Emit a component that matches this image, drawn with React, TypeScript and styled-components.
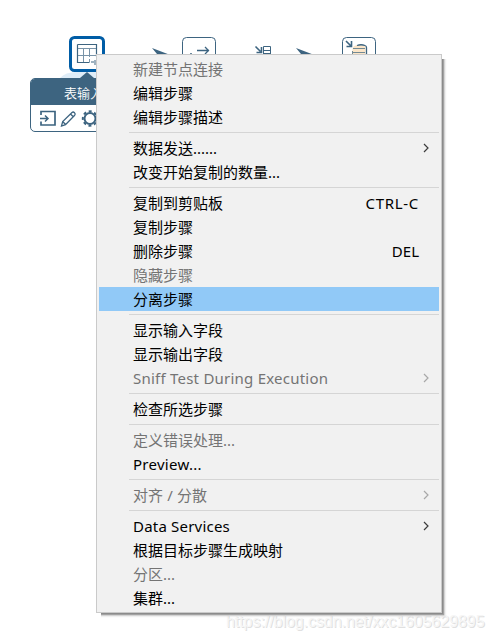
import React from "react";
import styled, { createGlobalStyle } from "styled-components";

const Global = createGlobalStyle`
  * { box-sizing: border-box; }
  body { margin: 0; background: #fff; overflow: hidden; }
`;

const Canvas = styled.main`
  position: relative;
  width: 494px;
  height: 640px;
  padding-top: 36px;
  overflow: hidden;
  background: #fff;
  font-family: "Noto Sans", "Noto Sans CJK SC", sans-serif;
`;

const Pipeline = styled.div`
  display: flex;
  align-items: center;
  height: 36px;
  padding-left: 69px;
`;

const Step = styled.div<{ $after?: number }>`
  flex: none;
  margin-right: ${(p) => p.$after ?? 0}px;
  svg { display: block; }
`;

const Callout = styled.aside`
  display: flex;
  flex-direction: column;
  width: 146px;
  padding-left: 30px;
`;

const CalloutTail = styled.svg`
  display: block;
  margin-left: 30px;
`;

const Popover = styled.section`
  width: 116px;
  height: 54px;
  border: 1px solid #3d6480;
  border-radius: 5px;
  overflow: hidden;
  background: #fff;
`;

const PopoverTitle = styled.header`
  height: 26px;
  padding-left: 33px;
  background: #3d6480;
  color: #fff;
  font-family: "Noto Sans CJK SC", sans-serif;
  font-size: 13px;
  font-weight: 350;
  line-height: 28px;
  white-space: nowrap;
`;

const PopoverTools = styled.div`
  display: flex;
  height: 26px;
  padding: 4px 0 0 7px;
  gap: 2px;
`;

const Menu = styled.nav`
  position: absolute;
  left: 96px;
  top: 54px;
  width: 346px;
  height: 559px;
  padding: 2px;
  border: 1px solid #cacaca;
  background: #f1f1f1;
  box-shadow: 1px 1px 0 #8b8b8b, 2px 2px 1px #a2a2a2, 3px 3px 2px #d0d0d0;
  clip-path: polygon(0 0, 346px 0, 346px 5px, 352px 5px, 352px 565px, 5px 565px, 5px 559px, 0 559px);
`;

const Row = styled.div<{ $disabled?: boolean; $selected?: boolean }>`
  display: flex;
  align-items: center;
  justify-content: space-between;
  height: 24px;
  padding: 0 9px 0 34px;
  color: ${(p) => (p.$disabled ? "#747474" : "#000")};
  background: ${(p) => (p.$selected ? "#91c9f7" : "transparent")};
  font-size: 15px;
  line-height: 24px;
  white-space: nowrap;
`;

const Label = styled.span<{ $spacing?: number }>`
  letter-spacing: ${(p) => p.$spacing ?? 0}px;
`;

const Shortcut = styled.span<{ $spacing?: number }>`
  margin-right: 11px;
  letter-spacing: ${(p) => p.$spacing ?? 0}px;
`;

const Separator = styled.hr`
  height: 1px;
  margin: 3px 0 3px 30px;
  border: 0;
  background: #d5d5d5;
`;

const Watermark = styled.div`
  position: absolute;
  left: 226px;
  top: 612px;
  color: #f6f6f6;
  font-family: "Liberation Sans", sans-serif;
  font-size: 16px;
  line-height: 20px;
  letter-spacing: -0.06px;
  text-shadow: 1px 1px 0 #e0e0e0;
  white-space: nowrap;
`;

type Item = {
  label: string;
  disabled?: boolean;
  selected?: boolean;
  submenu?: boolean;
  shortcut?: string;
  spacing?: number;
  shortcutSpacing?: number;
};

const groups: Item[][] = [
  [{ label: "新建节点连接", disabled: true }, { label: "编辑步骤" }, { label: "编辑步骤描述" }],
  [{ label: "数据发送......", submenu: true }, { label: "改变开始复制的数量..." }],
  [
    { label: "复制到剪贴板", shortcut: "CTRL-C", shortcutSpacing: 0.7 },
    { label: "复制步骤" },
    { label: "删除步骤", shortcut: "DEL" },
    { label: "隐藏步骤", disabled: true },
    { label: "分离步骤", selected: true },
  ],
  [
    { label: "显示输入字段" },
    { label: "显示输出字段" },
    { label: "Sniff Test During Execution", disabled: true, submenu: true, spacing: 0.23 },
  ],
  [{ label: "检查所选步骤" }],
  [{ label: "定义错误处理...", disabled: true }, { label: "Preview...", spacing: 0.28 }],
  [{ label: "对齐 / 分散", disabled: true, submenu: true, spacing: 0.1 }],
  [
    { label: "Data Services", submenu: true, spacing: 0.2 },
    { label: "根据目标步骤生成映射" },
    { label: "分区...", disabled: true },
    { label: "集群..." },
  ],
];

const Chevron = ({ disabled }: { disabled?: boolean }) => (
  <svg width="8" height="10" viewBox="0 0 8 10">
    <path d="M2 1l4 4-4 4" fill="none" stroke={disabled ? "#a8a8a8" : "#3c3c3c"} strokeWidth="1.2" />
  </svg>
);

const ink = "#3d6480";

const HopArrow = () => (
  <svg width="18" height="12" viewBox="0 0 18 12">
    <path d="M0 0L17 6.5 3 12 5 6z" fill={ink} />
  </svg>
);

const TableInputIcon = () => (
  <svg width="36" height="36" viewBox="0 0 36 36">
    <rect x="1.5" y="1.5" width="33" height="33" rx="4" fill="#fff" stroke="#005da6" strokeWidth="3" />
    <path d="M8.500 8.500h19v12M8.500 8.500v18h12" fill="none" stroke={ink} strokeWidth="1.2" />
    <path d="M9 12.500h18M9 19.500h18M14.500 12v14M20.500 12v9M20.500 23v3" fill="none" stroke="#7893a8" />
    <path d="M22 26h3M26 24v5" stroke={ink} />
  </svg>
);

const MapIcon = () => (
  <svg width="34" height="34" viewBox="0 0 34 34" fill="none" stroke={ink}>
    <rect x=".5" y=".5" width="33" height="33" rx="4" />
    <path d="M15 13.500h12M23 10l3.500 3.500L23 17" strokeWidth="1.300" />
    <path d="M9 16v3" strokeWidth="1.500" />
  </svg>
);

const InsertIcon = () => (
  <svg width="19" height="18" viewBox="0 0 19 18" fill="none" stroke={ink}>
    <path d="M1.500 1.500l5 5M7.500 2v5.500H2.500" strokeWidth="1.600" />
    <path d="M9.500 1.500h7v16h-7zM9 5.500h8M9 8.500h8" />
  </svg>
);

const DatabaseIcon = () => (
  <svg width="34" height="34" viewBox="0 0 34 34" fill="none" stroke={ink}>
    <rect x=".5" y=".5" width="33" height="33" rx="4" />
    <path d="M4 4l5 5M9.500 4v5.500H4.500" strokeWidth="1.600" />
    <path d="M10.500 12q0-4 7-4t6 3v15h-13z" fill="#fbe5c8" stroke="none" />
    <path d="M15 8.500q4-1.500 8 0 1.500.5 1.500 2v15" strokeWidth="1.300" />
    <path d="M10.500 14v12M11 11.500h12M11 15.500h12" stroke="#738a94" />
  </svg>
);

export default function App() {
  return (
    <>
      <Global />
      <Canvas>
        <Pipeline>
          <Step $after={47}><TableInputIcon /></Step>
          <Step $after={12}><HopArrow /></Step>
          <Step $after={38}><MapIcon /></Step>
          <Step $after={23}><InsertIcon /></Step>
          <Step $after={28}><HopArrow /></Step>
          <Step><DatabaseIcon /></Step>
        </Pipeline>
        <Callout>
          <CalloutTail width="56" height="6" viewBox="0 0 56 6">
            <path d="M0 6Q5 0 17 0H40Q50 0 56 6z" fill="#dfedf8" />
            <path d="M20 6L27 0l7 6z" fill={ink} />
          </CalloutTail>
          <Popover>
            <PopoverTitle>表输入</PopoverTitle>
            <PopoverTools>
              <svg width="19" height="19" viewBox="0 0 19 19" fill="none" stroke={ink} strokeWidth="2">
                <path d="M3 6V2.500h14v13.500H3V12.500" strokeWidth="1.700" />
                <path d="M2 9.500h8M7 6.500l3 3-3 3" strokeWidth="1.500" />
              </svg>
              <svg width="19" height="19" viewBox="0 0 19 19" fill="none" stroke={ink} strokeWidth="1.300">
                <path d="M2.500 17l1.200-4.500L13 3.500q1.200-1 2.500.2t.2 2.500L6.500 15.700zM11.500 5l3 3M3.700 12.500L6.500 15.500" />
              </svg>
              <svg width="19" height="19" viewBox="0 0 19 19" fill="none" stroke={ink}>
                <circle cx="10" cy="9.500" r="5.500" strokeWidth="2" />
                <circle cx="10" cy="9.500" r="7.200" strokeWidth="2" strokeDasharray="3 2.650" strokeDashoffset="1.500" />
              </svg>
            </PopoverTools>
          </Popover>
        </Callout>
        <Watermark>https://blog.csdn.net/xxc1605629895</Watermark>
        <Menu>
          {groups.map((group, index) => (
            <React.Fragment key={index}>
              {index > 0 && <Separator />}
              {group.map((item) => (
                <Row key={item.label} $disabled={item.disabled} $selected={item.selected}>
                  <Label $spacing={item.spacing}>{item.label}</Label>
                  {item.shortcut && <Shortcut $spacing={item.shortcutSpacing}>{item.shortcut}</Shortcut>}
                  {item.submenu && <Chevron disabled={item.disabled} />}
                </Row>
              ))}
            </React.Fragment>
          ))}
        </Menu>
      </Canvas>
    </>
  );
}
